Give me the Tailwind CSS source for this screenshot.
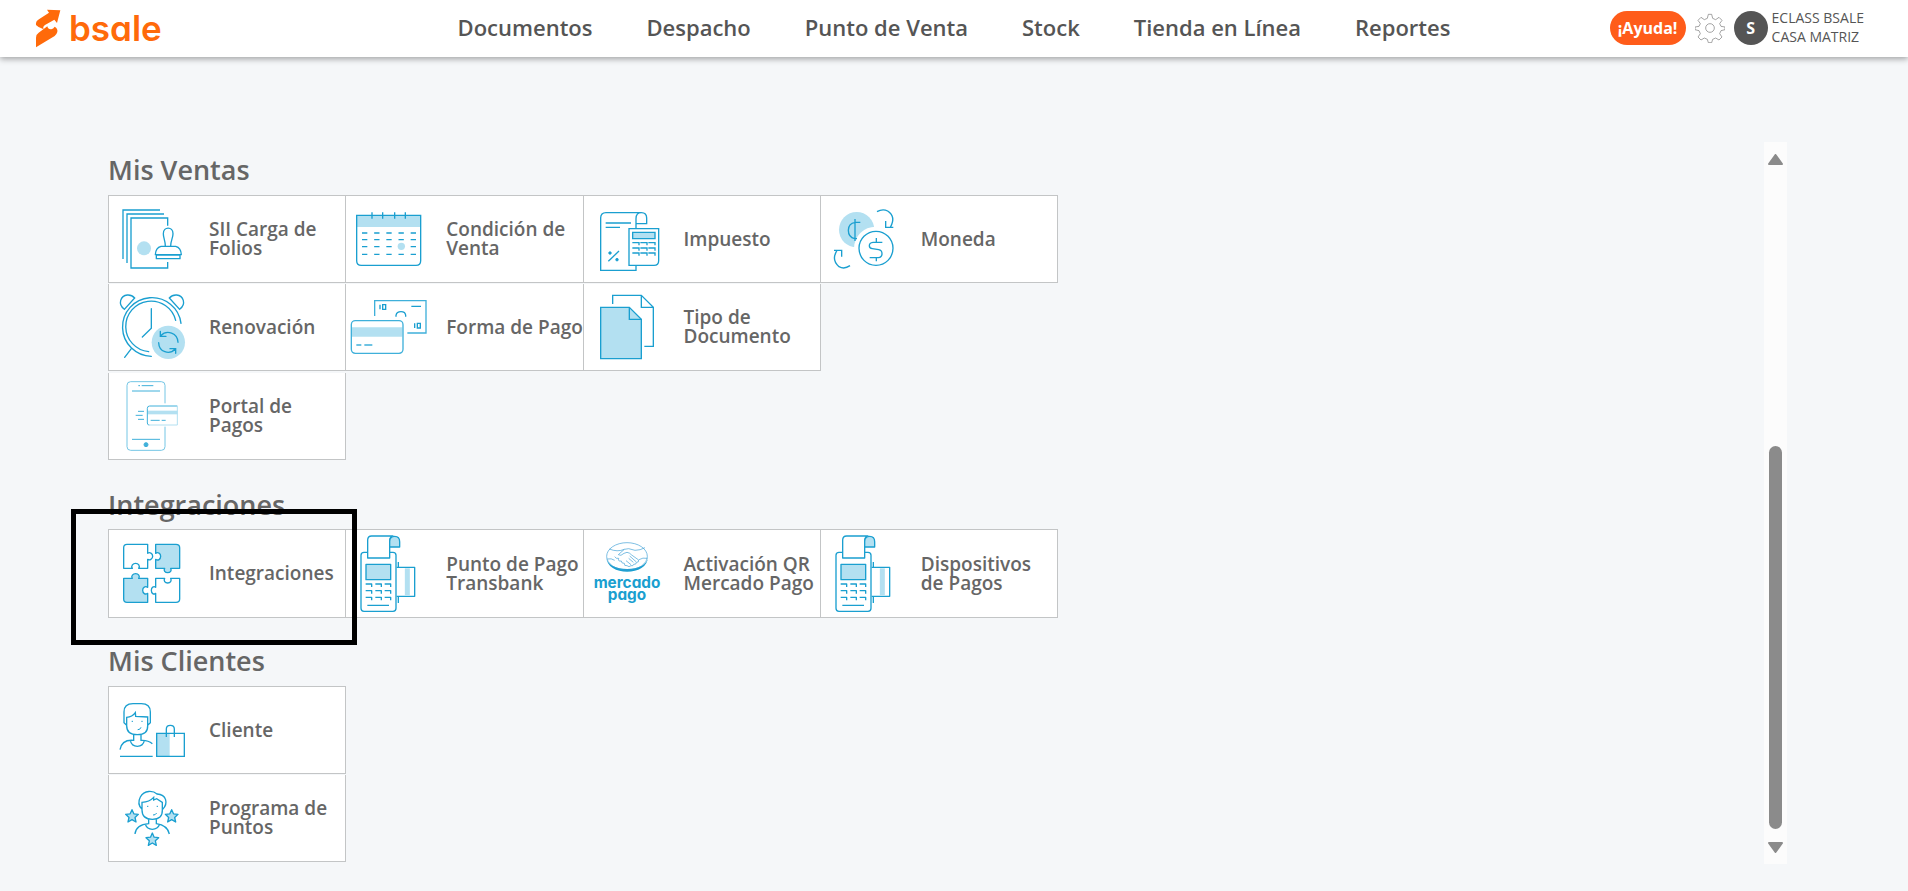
<!DOCTYPE html>
<html lang="es">
<head>
<meta charset="utf-8">
<meta name="viewport" content="width=device-width, initial-scale=1">
<title>Bsale - Configuración</title>
<script src="https://cdn.jsdelivr.net/npm/@tailwindcss/browser@4"></script>
</head>
<body class="flex min-h-screen flex-col bg-[#f5f7f9] font-['Open_Sans','Noto_Sans',sans-serif] text-[#666]">

<svg class="hidden" aria-hidden="true">
  <symbol id="pos" viewBox="860 150 300 258">
    <g fill="none" stroke="#1a9fd0" stroke-width="4" stroke-linejoin="round">
      <path d="M924 217h-10q-9 0-9 9v159q0 9 9 9h87q9 0 9-9V226q0-9-9-9h-9"/>
      <path fill="#fff" d="M925 234v-54q0-12 12-12h64q-10 3-10 15v51z"/>
      <path fill="#b3e0f1" d="M991 201v-16q0-16 15-16t15 16v16z"/>
      <path fill="#b3e0f1" d="M920 253h74v46h-74z"/>
      <path d="M1012 262h54v87h-54M1017 246v16M1017 349v20"/>
      <path stroke="#b3e0f1" stroke-width="15" d="M1044 265v81"/>
      <path d="M919 312h18v9M948 312h18v9M976 312h18v9M919 332h18v9M948 332h18v9M976 332h18v9M919 352h18v9M948 352h18v9M976 352h18v9M924 376h65"/>
    </g>
  </symbol>
  <symbol id="star" viewBox="-24 -24 48 48">
    <path fill="#b3e0f1" stroke="#1a9fd0" stroke-width="4" stroke-linejoin="round" d="M0-19l5.500 12.500 13.500 1.500-10 9.500 3 13.500-12-7-12 7 3-13.500-10-9.500 13.500-1.500z"/>
  </symbol>
</svg>

<header class="grid h-[57px] shrink-0 grid-cols-[1fr_auto_1fr] items-center bg-white px-[35px] pb-[2px] text-[#555] shadow-[0_2px_6px_rgba(0,0,0,0.35)]">
  <a href="#" aria-label="bsale" class="flex items-center gap-2 text-[#ff6a0a]">
    <svg class="h-[40px] w-[26px]" viewBox="45 25 78 120" fill="currentColor" aria-hidden="true">
      <path d="M48 76q-2-12 10-18l29-19-6-9 40 2-10 38-8-10-28 16q-8 5-4 13-16-5-23-13z"/>
      <path d="M48 143v-29q0-10 8-15l26-19q2 10 12 9 6-1 10-8 10 6 8 16-2 7-8 12z"/>
    </svg>
    <span class="font-['Inter',sans-serif] text-[35px] leading-[48px] font-semibold [font-feature-settings:'cv11']">bsale</span>
  </a>
  <nav class="flex gap-[54px] text-[22px] font-semibold whitespace-nowrap">
    <a href="#">Documentos</a>
    <a href="#">Despacho</a>
    <a href="#">Punto de Venta</a>
    <a href="#">Stock</a>
    <a href="#">Tienda en Línea</a>
    <a href="#">Reportes</a>
  </nav>
  <div class="flex items-center justify-end pr-[9px]">
    <button type="button" class="h-[34px] w-[76px] rounded-full bg-[#ff5c1a] text-base font-bold text-white">¡Ayuda!</button>
    <button type="button" aria-label="Configuración" class="mr-[9px] ml-[9px]">
      <svg class="h-[30px] w-[30px]" viewBox="344 39 90 90" fill="none" stroke="#777" stroke-width="2" stroke-linejoin="round">
        <circle cx="389" cy="84" r="13"/>
        <path d="M384 43h10l3 12 9 4 10-7 9 9-7 10 4 8 12 2v8l-12 3-4 9 7 10-9 9-10-6-9 4-3 10h-10l-3-10-9-4-10 6-9-9 7-10-4-9-12-3v-8l12-2 4-8-7-10 9-9 10 7 9-4z"/>
      </svg>
    </button>
    <span class="flex h-[34px] w-[34px] items-center justify-center rounded-full bg-[#555] text-base font-bold text-white">S</span>
    <p class="ml-1 pb-[2px] text-sm leading-[19px] font-medium whitespace-nowrap">ECLASS BSALE<br>CASA MATRIZ</p>
  </div>
</header>

<main class="mt-[85px] mr-[121px] mb-[27px] flex flex-1">
  <div class="flex-1 pt-3 pl-[108px] text-[19px] leading-[19px] font-semibold whitespace-nowrap">
    <section>
      <h2 class="mb-[9px] text-[27px] leading-8">Mis Ventas</h2>
      <div class="grid w-[949px] grid-cols-4">
        <a href="#" class="-mr-px flex h-[88px] items-center border border-[#c3c5c6] bg-white">
          <svg class="h-[86px] w-[100px] shrink-0" viewBox="27 168 300 258" fill="none" stroke="#1a9fd0" stroke-width="4" aria-hidden="true">
            <circle cx="132" cy="325" r="21" fill="#b3e0f1" stroke="none"/>
            <path d="M69 357V210h111M81 369V222h111M203 257v-23H93v150h110v-18"/>
            <path stroke-linejoin="round" d="M196 319c0-18-6-24-6-38 0-22 29-22 29 0 0 14-7 20-7 38M183 319h44q16 4 17 25h-78q1-21 17-25zM169 345h71v11h-71z"/>
          </svg>SII Carga de<br>Folios</a>
        <a href="#" class="-mr-px flex h-[88px] items-center border border-[#c3c5c6] bg-white">
          <svg class="h-[86px] w-[100px] shrink-0" viewBox="739 168 300 258" fill="none" stroke="#1a9fd0" stroke-width="4" aria-hidden="true">
            <path fill="#b3e0f1" stroke="none" d="M771 226h192v35H771z"/>
            <path d="M771 226h192v136q0 14-14 14H785q-14 0-14-14zM817 217v19M849 217v19M885 217v19M917 217v19"/>
            <g stroke-dasharray="16 20.500"><path d="M787 279h165M787 299h165M787 320h165M787 343h165"/></g>
            <circle cx="905" cy="319" r="11" fill="#b3e0f1" stroke="none"/>
          </svg>Condición de<br>Venta</a>
        <a href="#" class="-mr-px flex h-[88px] items-center border border-[#c3c5c6] bg-white">
          <svg class="h-[86px] w-[100px] shrink-0" viewBox="42 48 300 258" fill="none" stroke="#1a9fd0" stroke-width="4" aria-hidden="true">
            <path d="M198 144v-28q0-18 16-18H108q-16 0-16 16v157h106v-15M198 131h32v-17q0-16-16-16M107 129h76M107 142h43"/>
            <path fill="#fff" d="M177 146h89v96q0 14-14 14h-75z"/>
            <path fill="#b3e0f1" d="M188 157h67v19h-67z"/>
            <path d="M187 188h20v8M211 188h20v8M235 188h20v8M187 204h20v8M211 204h20v8M235 204h20v8M187 219h20v8M211 219h20v8M235 219h20v8"/>
            <path d="M115 244l32-31"/><circle cx="120" cy="219" r="4" fill="#1a9fd0" stroke-width="2"/><circle cx="141" cy="239" r="4" fill="#1a9fd0" stroke-width="2"/>
          </svg>Impuesto</a>
        <a href="#" class="-mr-px flex h-[88px] items-center border border-[#c3c5c6] bg-white">
          <svg class="h-[86px] w-[100px] shrink-0" viewBox="754 48 300 258" fill="none" stroke="#1a9fd0" stroke-width="4" aria-hidden="true">
            <circle cx="861" cy="149" r="53" fill="#b3e0f1" stroke="none"/>
            <circle cx="918" cy="205" r="65" fill="#fff" stroke="none"/>
            <circle cx="919" cy="205" r="51"/>
            <path d="M872 127h-15q-21 3-21 24t19 25h7M856 117v66"/>
            <path d="M938 187h-28q-11 1-11 10 0 8 9 9l19 3q10 2 10 12 0 11-11 12h-26M920 174v13M920 233v11"/>
            <path d="M922 95q17-10 32-2 26 17 8 49h-11M948 123v19h23"/>
            <path d="M841 257q-17 12-33 3-24-20-6-49h12M793 211h23v19"/>
          </svg>Moneda</a>
      </div>
      <div class="grid w-[949px] grid-cols-4">
        <a href="#" class="mt-px -mr-px flex h-[87px] items-center border border-t-0 border-[#c3c5c6] bg-white">
          <svg class="h-[86px] w-[100px] shrink-0" viewBox="27 12 300 258" fill="none" stroke="#1a9fd0" stroke-width="4" stroke-linecap="round" aria-hidden="true">
            <path d="M243 130A88 88 0 1 0 154 229"/>
            <path d="M227 121A76 76 0 1 0 146 215"/>
            <path d="M73 88C52 72 62 47 82 45q13-1 22 9zM239 88c21-16 11-41-9-43q-13-1-22 9zM94 206l-20 26M154 86v59l-27 26"/>
            <circle cx="205" cy="187" r="50" fill="#b3e0f1" stroke="none"/>
            <path d="M234 187c-1-28-33-39-52-20M181 154v15h17M176 188c1 28 32 38 50 19M210 206h17v14"/>
          </svg>Renovación</a>
        <a href="#" class="mt-px -mr-px flex h-[87px] items-center border border-t-0 border-[#c3c5c6] bg-white">
          <svg class="h-[86px] w-[100px] shrink-0" viewBox="739 12 300 258" fill="none" stroke="#3fb0da" stroke-width="4" aria-hidden="true">
            <path d="M825 108V62h154v97h-56"/>
            <path stroke="#1a9fd0" d="M889 110v-4q2-11 15-11t14 11v4M935 79h29M841 74v14M849 74h9v14h-9zM945 130v14M953 130h9v14h-9z"/>
            <path fill="#b3e0f1" stroke="none" d="M756 142h152v28H756z"/>
            <rect x="755" y="122" width="155" height="98" rx="12"/>
            <path d="M770 195h15M794 195h24"/>
          </svg>Forma de Pago</a>
        <a href="#" class="mt-px -mr-px flex h-[87px] items-center border border-t-0 border-[#c3c5c6] bg-white">
          <svg class="h-[86px] w-[100px] shrink-0" viewBox="42 12 300 258" fill="none" stroke="#1a9fd0" stroke-width="4" aria-hidden="true">
            <path d="M128 72V46h86l36 36v117h-27M214 46v36h36"/>
            <path fill="#b3e0f1" d="M92 82h86l36 36v118H92z"/><path d="M178 82v36h36"/>
          </svg>Tipo de<br>Documento</a>
      </div>
      <div class="grid w-[949px] grid-cols-4">
        <a href="#" class="mt-[2px] -mr-px flex h-[87px] items-center border border-t-0 border-[#c3c5c6] bg-white">
          <svg class="h-[86px] w-[100px] shrink-0" viewBox="27 279 300 258" fill="none" stroke="#3fb0da" stroke-width="3" aria-hidden="true">
            <path stroke="#74c6e5" d="M195 370v-54q0-11-11-11H92q-11 0-11 11v184q0 11 11 11h92q11 0 11-11v-60"/>
            <path d="M115 317h5M125 317h35M96 333h84M96 478h84"/>
            <circle cx="138" cy="494" r="6" fill="#3fb0da"/>
            <path fill="#b3e0f1" stroke="none" d="M143 392h90v11h-90z"/>
            <path d="M232 378h-83q-7 0-7 7v44q0 6 6 6"/><path stroke="#b3e0f1" d="M232 378v57h-87"/>
            <path d="M114 394h18M107 406h21M114 418h18M152 421h27M185 421h12"/>
          </svg>Portal de<br>Pagos</a>
      </div>
    </section>

    <section class="mt-[29px]">
      <h2 class="mb-2 text-[27px] leading-8">Integraciones</h2>
      <div class="relative grid w-[949px] grid-cols-4">
        <a href="#" class="-mr-px flex h-[89px] items-center border border-[#c3c5c6] bg-white">
          <svg class="h-[86px] w-[100px] shrink-0 self-start" viewBox="147 150 300 258" fill="none" stroke="#1a9fd0" stroke-width="4" stroke-linejoin="round" aria-hidden="true">
            <path d="M201 193h62v27c6-5 15 0 15 9s-9 13-15 9v27h-27c5-7-1-15-9-15s-15 8-10 15h-26v-62q0-10 10-10z"/>
            <path fill="#b3e0f1" d="M287 193h61q11 0 11 10v62h-27c4 7-1 13-9 13s-13-6-9-13h-27v-27c7 5 15 0 15-9s-8-14-15-9z"/>
            <path fill="#b3e0f1" d="M191 295h26c-5-7 2-14 10-14s14 7 9 14h27v27c-7-5-15 0-15 9s8 14 15 9v27h-62q-10 0-10-10z"/>
            <path d="M287 295h27c-4 7 1 14 9 14s13-7 9-14h27v62q0 10-11 10h-61v-27c-6 5-13 0-13-9s7-14 13-9z"/>
          </svg>Integraciones</a>
        <a href="#" class="-mr-px flex h-[89px] items-center border border-[#c3c5c6] bg-white">
          <svg class="h-[86px] w-[100px] shrink-0 self-start" aria-hidden="true"><use href="#pos"/></svg>Punto de Pago<br>Transbank</a>
        <a href="#" class="-mr-px flex h-[89px] items-center border border-[#c3c5c6] bg-white">
          <svg class="h-[86px] w-[100px] shrink-0 self-start" viewBox="42 60 300 258" fill="none" stroke="#3d9fd4" stroke-width="2" aria-hidden="true">
            <path fill="#1a9fd0" stroke="none" d="M109 140c0 60 125 60 125 0 0 49-125 49-125 0z"/>
            <ellipse cx="171" cy="139" rx="61" ry="41"/>
            <path d="M118 117q24 10 45 1l13-2 19 5q16 0 30-8M112 147q12-3 22 4M232 145q-14-3-25 4M163 118l-18 16q7 6 17-4l9-3q8 1 14 8l21 15q1 8-7 7 1 7-8 6-1 6-8 4-6 6-12 0-9 2-8-7-9 1-9-7-11 2-8-8-8 2-12-5M190 157l-14-12M183 164l-15-12M198 155l-19-17"/>
            <g fill="#1a9fd0" stroke="none" text-anchor="middle" class="font-['Inter',sans-serif] text-[46px] font-bold [font-feature-settings:'cv11']">
              <text x="171" y="235">mercado</text>
              <text x="171" y="270">pago</text>
            </g>
          </svg>Activación QR<br>Mercado Pago</a>
        <a href="#" class="-mr-px flex h-[89px] items-center border border-[#c3c5c6] bg-white">
          <svg class="h-[86px] w-[100px] shrink-0 self-start" aria-hidden="true"><use href="#pos"/></svg>Dispositivos<br>de Pagos</a>
        <div class="pointer-events-none absolute -top-5 -left-[37px] h-[136px] w-[286px] border-5 border-black"></div>
      </div>
    </section>

    <section class="mt-[27px]">
      <h2 class="mb-[9px] text-[27px] leading-8">Mis Clientes</h2>
      <div class="grid w-[949px] grid-cols-4">
        <a href="#" class="-mr-px flex h-[88px] items-center border border-[#c3c5c6] bg-white">
          <svg class="h-[86px] w-[100px] shrink-0" viewBox="27 21 300 258" fill="none" stroke="#1a9fd0" stroke-width="4" aria-hidden="true">
            <path d="M80 136l-8-8V96q0-25 27-25h25q27 0 27 25v32l-8 8M80 112v25q0 27 32 27t31-27v-26l-36-2-1-11q-9 13-26 14z"/>
            <path d="M101 164v17q-36-3-41 28M123 164v17q22-1 34 10M91 182q4 17 21 17t21-17M60 229h98"/>
            <path stroke-width="3" d="M95 124h4M124 124h4M113 149q7 1 10-7"/>
            <path fill="#b3e0f1" stroke="none" d="M170 160h39v69h-39z"/>
            <path d="M170 160h83v69h-83zM199 171v-24q0-11 12-11t12 11v24"/>
          </svg>Cliente</a>
      </div>
      <div class="grid w-[949px] grid-cols-4">
        <a href="#" class="mt-px -mr-px flex h-[87px] items-center border border-t-0 border-[#c3c5c6] bg-white">
          <svg class="h-[86px] w-[100px] shrink-0" viewBox="27 285 300 258" fill="none" stroke="#1a9fd0" stroke-width="4" aria-hidden="true">
            <path d="M126 388q-16-16-5-37c12-22 39-19 50-9 29 1 34 29 17 46M126 367v23q0 28 31 28t30-28v-23l-17-11-9 4v-8q-13 14-35 15z"/>
            <path d="M146 418v13q-38 3-41 31M169 418v13q34 5 39 31M136 433q5 15 21 15t22-15"/>
            <path stroke-width="3" d="M141 379h4M170 379h4M159 405q7 1 11-6"/>
            <use href="#star" x="72" y="384" width="48" height="48"/>
            <use href="#star" x="191" y="384" width="48" height="48"/>
            <use href="#star" x="133" y="454" width="48" height="48"/>
          </svg>Programa de<br>Puntos</a>
      </div>
    </section>
  </div>

  <div class="flex w-[23px] flex-col items-center bg-[#fcfcfc] pt-3 pb-[11px]" aria-hidden="true">
    <svg class="h-[11px] w-[15px]" viewBox="0 0 15 11"><path fill="#8b8b8b" stroke="#8b8b8b" stroke-width="2" stroke-linejoin="round" d="M7.500 1L14 10H1z"/></svg>
    <div class="flex-[281]"></div>
    <div class="w-[13px] flex-[383] rounded-full bg-[#8b8b8b]"></div>
    <svg class="mt-[13px] h-[11px] w-[15px]" viewBox="0 0 15 11"><path fill="#8b8b8b" stroke="#8b8b8b" stroke-width="2" stroke-linejoin="round" d="M7.500 10L14 1H1z"/></svg>
  </div>
</main>
</body>
</html>
